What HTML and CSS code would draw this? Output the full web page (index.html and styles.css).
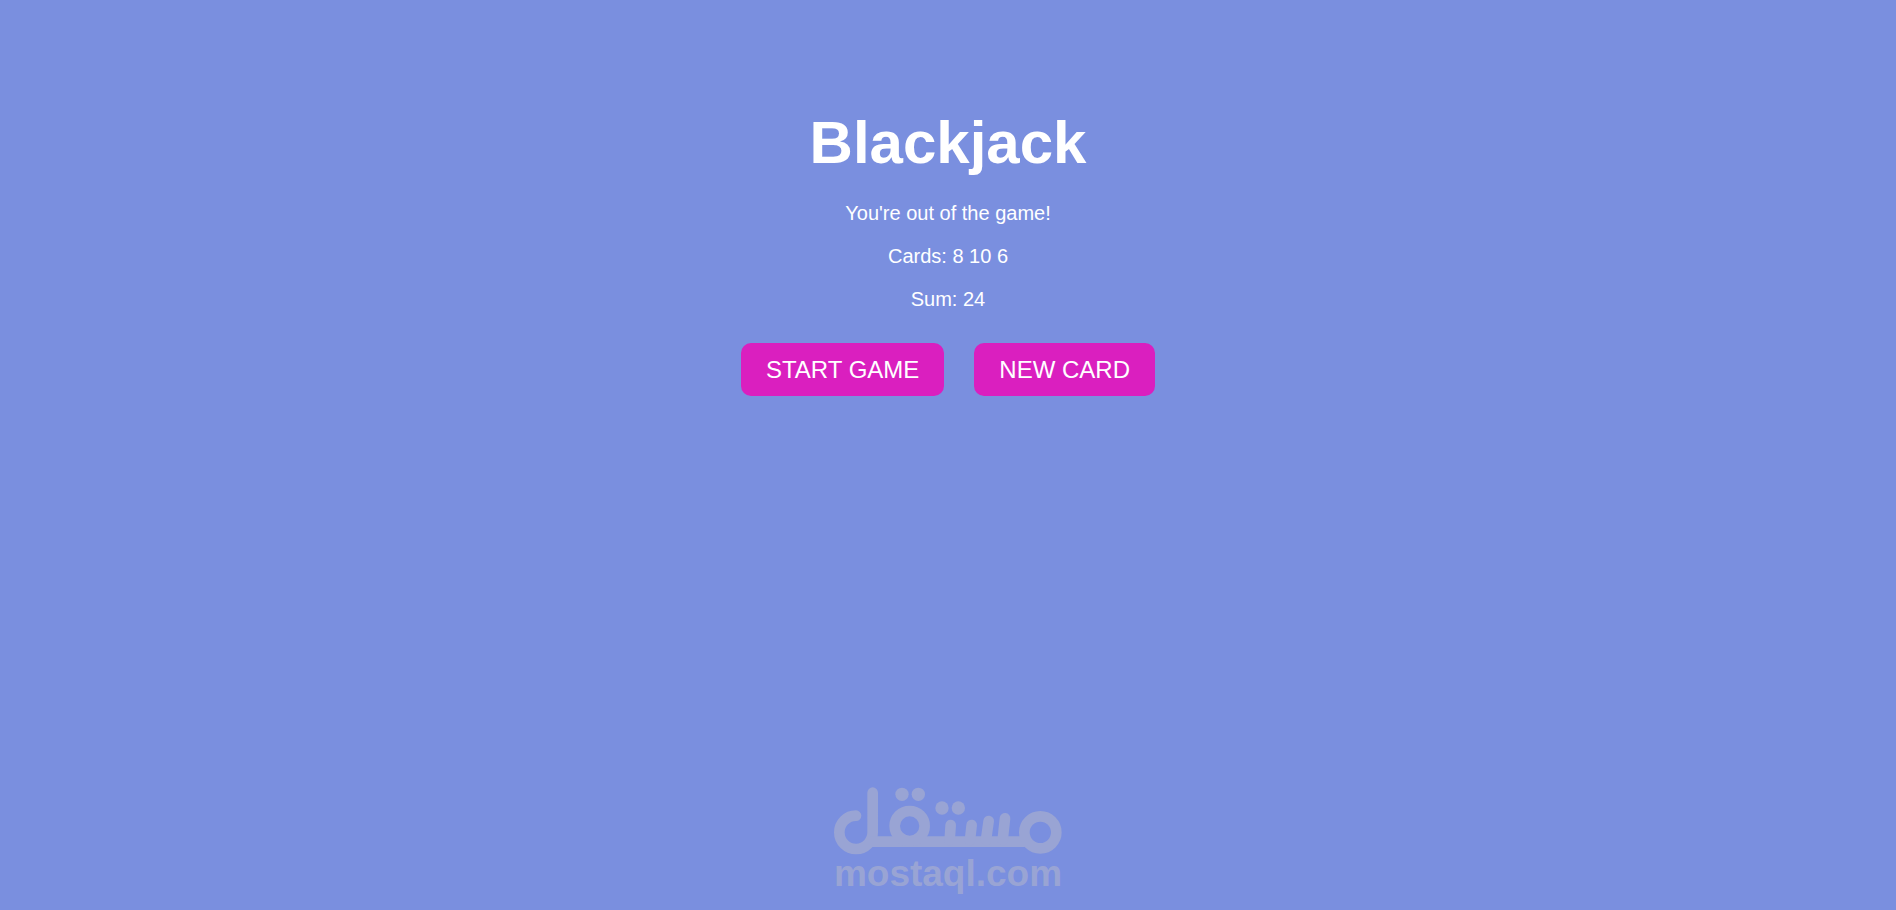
FILE: index.html
```html
<!DOCTYPE html>
<html lang="en">
<head>
<meta charset="utf-8">
<title>Blackjack</title>
<link rel="stylesheet" href="styles.css">
</head>
<body>
<main class="game">
  <h1 class="title">Blackjack</h1>
  <p class="line">You're out of the game!</p>
  <p class="line">Cards: 8 10 6</p>
  <p class="line">Sum: 24</p>
  <div class="actions">
    <button class="btn" type="button">START GAME</button>
    <button class="btn" type="button">NEW CARD</button>
  </div>
</main>
<footer class="brand">
  <svg class="brand-mark" viewBox="42 36 684 204" role="img" aria-label="مستقل">
    <g fill="none" stroke="currentColor" stroke-width="32" stroke-linecap="round">
      <path d="M108 122A50 50 0 1 0 158 171V53"/>
      <path d="M150 200H622" stroke-linecap="butt"/>
      <circle cx="269" cy="153" r="45"/>
      <path d="M392 150L389 195M455 150L450 195M506 138L498 195M555 130L548 195"/>
      <circle cx="661" cy="172" r="48"/>
    </g>
    <g fill="currentColor">
      <circle cx="246" cy="58" r="20"/>
      <circle cx="295" cy="58" r="20"/>
      <circle cx="366" cy="99" r="20"/>
      <circle cx="415" cy="99" r="20"/>
    </g>
  </svg>
  <span class="brand-name">mostaql.com</span>
</footer>
</body>
</html>
```
FILE: styles.css
```css
* {
  box-sizing: border-box;
}

body {
  margin: 0;
  min-height: 100vh;
  display: flex;
  flex-direction: column;
  justify-content: space-between;
  background: #7a8fdf;
  color: #fff;
  font-family: Arial, "Liberation Sans", sans-serif;
  font-size: 20px;
  line-height: 23px;
  text-align: center;
}

.game {
  padding-top: 108px;
}

.title {
  margin: 0 0 25px;
  font-size: 60px;
  line-height: 69px;
}

.line {
  margin: 0 0 20px;
}

.actions {
  display: flex;
  justify-content: center;
  gap: 30px;
  padding-top: 12px;
}

.btn {
  padding: 13px 25px;
  border: 0;
  border-radius: 10px;
  background: #da1fbf;
  color: #fff;
  font: inherit;
  font-size: 24px;
  line-height: 27px;
  cursor: pointer;
}

.brand {
  display: flex;
  flex-direction: column;
  align-items: center;
  padding-bottom: 17px;
  color: #99a4d4;
}

.brand-mark {
  width: 228px;
  height: 68px;
}

.brand-name {
  font-size: 37px;
  font-weight: bold;
  line-height: 38px;
}
```
